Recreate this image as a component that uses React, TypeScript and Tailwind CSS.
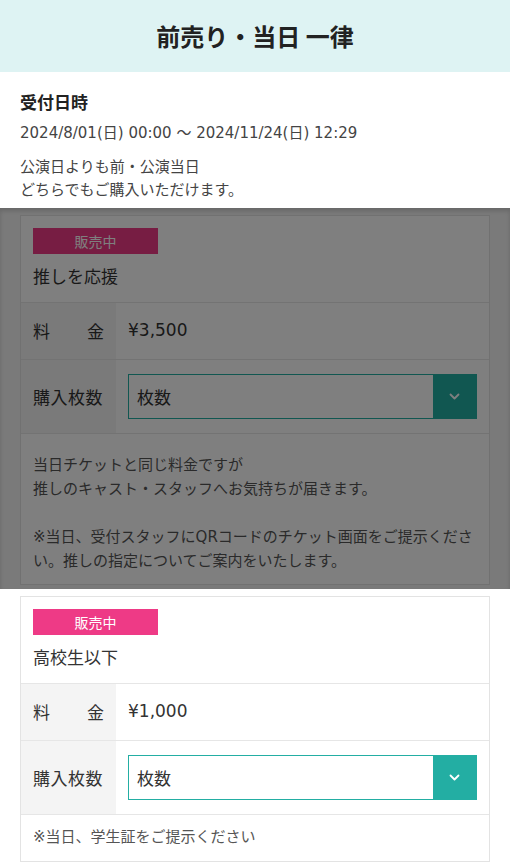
import React from "react";

const font = { fontFamily: '"DejaVu Sans", "Noto Sans CJK JP", sans-serif' };
const cjk = { fontFamily: '"Noto Sans CJK JP", sans-serif' };

function Chevron() {
  return (
    <svg width="11" height="7" viewBox="0 0 11 7" fill="none">
      <polyline points="1.5,1.5 5.5,5.5 9.5,1.5" stroke="white" strokeWidth="1.8" strokeLinecap="round" strokeLinejoin="round" />
    </svg>
  );
}

function Card({
  title,
  price,
  notes,
  notePad,
}: {
  title: string;
  price: string;
  notes: React.ReactNode;
  notePad: string;
}) {
  return (
    <div className="mx-5 border border-[#e3e3e3] bg-white">
      <div className="h-[86px] px-3 pt-3">
        <div className="flex h-[26px] w-[125px] items-center justify-center bg-[#ee3a86] text-[14px] text-white" style={cjk}>
          販売中
        </div>
        <div className="mt-[10px] text-[17px] leading-6 text-[#333]" style={cjk}>{title}</div>
      </div>
      <div className="flex h-[57px] border-t border-[#e6e6e6]">
        <div className="flex w-[95px] items-center justify-between bg-[#f4f4f4] px-3 text-[17px] text-[#333]" style={cjk}>
          <span>料</span>
          <span>金</span>
        </div>
        <div className="flex items-center pl-3 text-[17px] text-[#333]">{price}</div>
      </div>
      <div className="flex h-[74px] border-t border-[#e6e6e6]">
        <div className="flex w-[95px] items-center bg-[#f4f4f4] pl-3 text-[17px] tracking-[0.5px] text-[#333]" style={cjk}>購入枚数</div>
        <div className="flex flex-1 items-center px-3">
          <div className="flex h-[45px] flex-1 border border-[#23aea3] bg-white">
            <div className="flex flex-1 items-center pl-[8px] text-[17px] text-[#333]" style={cjk}>枚数</div>
            <div className="flex w-[43px] items-center justify-center bg-[#23aea3]">
              <Chevron />
            </div>
          </div>
        </div>
      </div>
      <div className={`border-t border-[#e6e6e6] px-3 text-[15px] leading-6 text-[#555] ${notePad}`}>{notes}</div>
    </div>
  );
}

export default function App() {
  return (
    <div className="w-[510px] bg-white" style={font}>
      <div className="flex h-[72px] items-center justify-center bg-[#def3f3] text-[24px] font-bold text-[#222]" style={cjk}>
        前売り・当日 一律
      </div>
      <div className="h-[136px] px-5 pt-[18px]">
        <div className="text-[17px] font-bold leading-6 text-[#222]" style={cjk}>受付日時</div>
        <div className="mt-[7px] text-[15px] leading-6 text-[#444]">2024/8/01(日) 00:00 ～ 2024/11/24(日) 12:29</div>
        <div className="mt-[9px] text-[15px] leading-[23px] text-[#444]" style={cjk}>
          <div>公演日よりも前・公演当日</div>
          <div>どちらでもご購入いただけます。</div>
        </div>
      </div>
      <div className="relative bg-[#f4f4f4] pb-[4px] pt-[7px]">
        <Card
          title="推しを応援"
          price="¥3,500"
          notePad="pt-[19px] pb-[11px]"
          notes={
            <>
              <div>当日チケットと同じ料金ですが</div>
              <div>推しのキャスト・スタッフへお気持ちが届きます。</div>
              <div className="h-6" />
              <div>※当日、受付スタッフにQRコードのチケット画面をご提示ください。推しの指定についてご案内をいたします。</div>
            </>
          }
        />
        <div className="absolute inset-0 bg-black/50 shadow-[inset_0_3px_4px_rgba(0,0,0,0.15)]" />
      </div>
      <div className="pt-[7px] pb-[5px]">
        <Card
          title="高校生以下"
          price="¥1,000"
          notePad="pt-[10px] pb-[12px]"
          notes={<div>※当日、学生証をご提示ください</div>}
        />
      </div>
    </div>
  );
}
